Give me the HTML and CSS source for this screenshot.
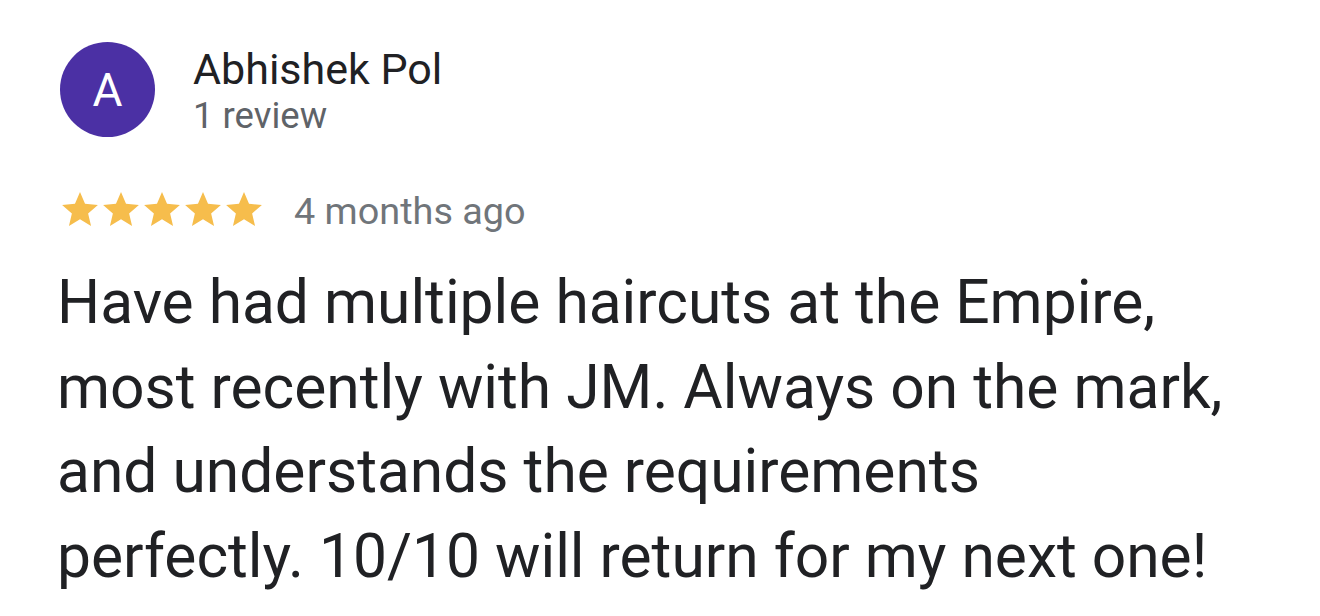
FILE: index.html
```html
<!DOCTYPE html>
<html lang="en">
<head>
  <meta charset="UTF-8">
  <title>Review</title>
  <link rel="stylesheet" href="styles.css">
</head>
<body>

<div class="review">
  <!-- author -->
  <div class="author">
    <div class="avatar">A</div>
    <div class="author-info">
      <div class="author-name">Abhishek Pol</div>
      <div class="author-count">1 review</div>
    </div>
  </div>

  <!-- stars + date -->
  <div class="rating">
    <div class="stars">
      <svg class="star" viewBox="2 2 20 19"><path d="M12 17.27L18.18 21l-1.64-7.03L22 9.24l-7.19-.61L12 2 9.19 8.63 2 9.24l5.46 4.73L5.82 21z"/></svg>
      <svg class="star" viewBox="2 2 20 19"><path d="M12 17.27L18.18 21l-1.64-7.03L22 9.24l-7.19-.61L12 2 9.19 8.63 2 9.24l5.46 4.73L5.82 21z"/></svg>
      <svg class="star" viewBox="2 2 20 19"><path d="M12 17.27L18.18 21l-1.64-7.03L22 9.24l-7.19-.61L12 2 9.19 8.63 2 9.24l5.46 4.73L5.82 21z"/></svg>
      <svg class="star" viewBox="2 2 20 19"><path d="M12 17.27L18.18 21l-1.64-7.03L22 9.24l-7.19-.61L12 2 9.19 8.63 2 9.24l5.46 4.73L5.82 21z"/></svg>
      <svg class="star" viewBox="2 2 20 19"><path d="M12 17.27L18.18 21l-1.64-7.03L22 9.24l-7.19-.61L12 2 9.19 8.63 2 9.24l5.46 4.73L5.82 21z"/></svg>
    </div>
    <span class="rating-date">4 months ago</span>
  </div>

  <p class="review-text">Have had multiple haircuts at the Empire, most recently with JM. Always on the mark, and understands the requirements perfectly. 10/10 will return for my next one!</p>
</div>

</body>
</html>
```

FILE: styles.css
```css
body {
  margin: 0;
  background: #fff;
  font-family: Roboto, "Liberation Sans", sans-serif;
  color: #202124;
}

.review {
  padding: 42px 0 0 60px;
}

.author {
  display: flex;
}

.avatar {
  width: 95px;
  height: 95px;
  border-radius: 50%;
  background: #4b30a4;
  color: #fff;
  font-size: 46px;
  line-height: 1;
  display: flex;
  align-items: center;
  justify-content: center;
}

.author-info {
  margin-left: 38px;
  padding-top: 3px;
}

.author-name {
  font-size: 43px;
  line-height: 48px;
}

.author-count {
  font-size: 36.5px;
  line-height: 45px;
  color: #5f6368;
}

.rating {
  display: flex;
  align-items: center;
  margin-top: 46px;
}

.stars {
  display: flex;
  gap: 5px;
  margin-left: 2px;
}

.star {
  width: 36px;
  height: 34px;
  fill: #f6bd4c;
}

.rating-date {
  margin-left: 32px;
  padding-top: 5px;
  font-size: 37.8px;
  line-height: 44px;
  color: #70757a;
}

.review-text {
  margin: 28px 0 0 -3px;
  width: 1172px;
  font-size: 60.5px;
  line-height: 84.5px;
}
```
